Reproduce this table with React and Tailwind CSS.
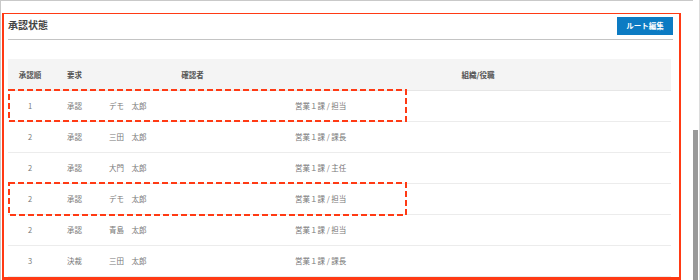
import React from 'react';

const rows = [
  { order: '1', type: '承認', name: 'デモ　太郎', org: '営業１課 / 担当' },
  { order: '2', type: '承認', name: '三田　太郎', org: '営業１課 / 課長' },
  { order: '2', type: '承認', name: '大門　太郎', org: '営業１課 / 主任' },
  { order: '2', type: '承認', name: 'デモ　太郎', org: '営業１課 / 担当' },
  { order: '2', type: '承認', name: '青島　太郎', org: '営業１課 / 担当' },
  { order: '3', type: '決裁', name: '三田　太郎', org: '営業１課 / 課長' },
];

function DashedBox({ top, height }) {
  return (
    <svg
      className="absolute left-0 pointer-events-none"
      style={{ top }}
      width="399"
      height={height}
    >
      <rect
        x="1"
        y="1"
        width="397"
        height={height - 2}
        fill="none"
        stroke="#ff3a14"
        strokeWidth="2"
        strokeDasharray="6 3"
      />
    </svg>
  );
}

export default function App() {
  return (
    <div
      className="flex h-[280px] w-[700px] overflow-hidden bg-white"
      style={{ fontFamily: '"Noto Sans CJK JP", "Noto Sans", sans-serif' }}
    >
      <div className="h-[280px] w-[693px] border-l border-t border-[#c9c9c9] pl-[1px] pt-[12px]">
        <div className="h-[267px] w-[679px] overflow-hidden border-2 border-b-[3px] border-t border-[#ff3a14]">
          {/* header */}
          <div className="ml-[4px] mr-[6px] flex h-[26px] items-start justify-between border-b border-[#c4c4c4]">
            <h2 className="mt-[6px] text-[10px] font-bold leading-none text-[#444]">承認状態</h2>
            <button className="mt-[3px] h-[18px] w-[56px] bg-[#0c7bc3] text-[7.5px] font-bold text-white">
              ルート編集
            </button>
          </div>

          {/* table */}
          <div className="relative ml-[4px] mt-[19px] w-[663px]">
            <table className="w-[663px] table-fixed border-collapse text-[7.5px]">
              <colgroup>
                <col className="w-[44px]" />
                <col className="w-[48px]" />
                <col className="w-[185px]" />
                <col className="w-[386px]" />
              </colgroup>
              <thead>
                <tr className="h-[31px] border-b border-[#e6e6e6] bg-[#f4f4f4] font-bold text-[#555]">
                  <th className="text-center font-bold">承認順</th>
                  <th className="pl-[15px] text-left font-bold">要求</th>
                  <th className="text-center font-bold">確認者</th>
                  <th className="text-center font-bold">組織/役職</th>
                </tr>
              </thead>
              <tbody className="text-[#777]">
                {rows.map((r, i) => (
                  <tr key={i} className="h-[31px] border-b border-[#ececec]">
                    <td className="text-center">{r.order}</td>
                    <td className="pl-[15px]">{r.type}</td>
                    <td className="pl-[9px]">{r.name}</td>
                    <td className="pl-[10px]">{r.org}</td>
                  </tr>
                ))}
              </tbody>
            </table>
            <DashedBox top={30} height={33} />
            <DashedBox top={123} height={34} />
          </div>
        </div>
      </div>

      {/* scrollbar */}
      <div className="h-[280px] w-[7px] border-r border-[#dcdcdc]">
        <div className="mt-[130px] h-[150px] w-[5px] bg-[#9a9a9a]" />
      </div>
    </div>
  );
}
